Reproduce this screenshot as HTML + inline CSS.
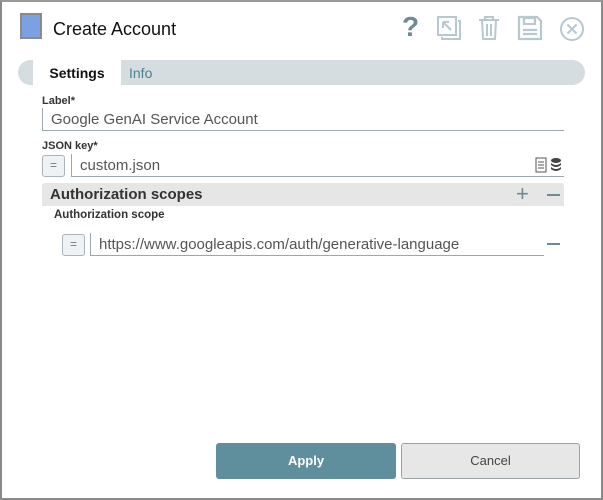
<!DOCTYPE html>
<html><head><style>
*{box-sizing:border-box;margin:0;padding:0}
body{width:603px;height:500px;background:#fff;font-family:"Liberation Sans",sans-serif;position:relative;overflow:hidden}
.frame{position:absolute;left:0;top:0;width:603px;height:500px;border:2px solid #8a8a8a;border-top-color:#999}
.a{position:absolute}
.eq{position:absolute;width:23px;height:22px;border:1px solid #a9b4bb;border-radius:3px;background:#eef2f4;color:#777;font-size:12px;text-align:center;line-height:19px}
.in{position:absolute;border-left:1px solid #9aa7ae;border-bottom:1px solid #9aa7ae;color:#555;font-size:15px;padding-left:8px;padding-top:3px}
</style></head><body>
<div class="frame"></div>
<div class="a" style="left:20px;top:13px;width:22px;height:26px;background:#7ca1e3;border:2px solid #8a8a8a"></div>
<div class="a" style="left:53px;top:19px;font-size:18px;color:#111">Create Account</div>
<div class="a" style="left:402px;top:11px;font-size:28px;font-weight:bold;color:#6d8a96">?</div>
<svg class="a" style="left:436px;top:15px" width="26" height="26" viewBox="0 0 26 26" fill="none" stroke="#b8c8cf" stroke-width="2"><rect x="2" y="2" width="18" height="18"/><path d="M6 22V24H24V6H22"/><path d="M7 7L15 15M7 7V13M7 7H13"/></svg>
<svg class="a" style="left:477px;top:15px" width="24" height="26" viewBox="0 0 24 26" fill="none" stroke="#b8c8cf" stroke-width="2"><path d="M2 5H22M8 5V2H16V5M5 5L6 24H18L19 5M10 9V21M14 9V21"/></svg>
<svg class="a" style="left:517px;top:15px" width="26" height="26" viewBox="0 0 26 26" fill="none" stroke="#b8c8cf" stroke-width="2.2"><path d="M2 2H20L24 6V24H2Z"/><rect x="7" y="3" width="11" height="6"/><path d="M6 15H20M6 19H20"/></svg>
<svg class="a" style="left:559px;top:16px" width="26" height="26" viewBox="0 0 26 26" fill="none" stroke="#b8c8cf" stroke-width="2"><circle cx="13" cy="13" r="11"/><path d="M8.5 8.5L17.5 17.5M17.5 8.5L8.5 17.5"/></svg>
<div class="a" style="left:18px;top:60px;width:567px;height:25px;background:#d5dde1;border-radius:13px"></div>
<div class="a" style="left:33px;top:60px;width:88px;height:25px;background:#fff;font-size:14px;font-weight:bold;color:#111;text-align:center;line-height:26px">Settings</div>
<div class="a" style="left:129px;top:60px;font-size:14px;color:#4e7f92;line-height:26px">Info</div>
<div class="a" style="left:42px;top:95px;font-size:11px;color:#333;font-weight:bold">Label*</div>
<div class="in" style="left:42px;top:108px;width:522px;height:23px">Google GenAI Service Account</div>
<div class="a" style="left:42px;top:140px;font-size:11px;color:#333;font-weight:bold">JSON key*</div>
<div class="eq" style="left:42px;top:155px">=</div>
<div class="in" style="left:71px;top:154px;width:493px;height:23px">custom.json</div>
<svg class="a" style="left:535px;top:157px" width="30" height="16" viewBox="0 0 30 16"><rect x="1" y="1" width="10" height="14" fill="#fff" stroke="#555"/><path d="M3 5H9M3 8H9M3 11H9" stroke="#555"/><ellipse cx="21" cy="3.5" rx="5" ry="2.5" fill="#444"/><path d="M16 6Q21 10 26 6V8Q21 12 16 8ZM16 10Q21 14 26 10V12Q21 16 16 12Z" fill="#444"/></svg>
<div class="a" style="left:42px;top:183px;width:522px;height:23px;background:#e6e6e6;border-radius:3px 3px 0 0"></div>
<div class="a" style="left:50px;top:186px;font-size:15px;font-weight:bold;color:#333">Authorization scopes</div>
<div class="a" style="left:516px;top:181px;font-size:22px;color:#6d8a96">+</div>
<div class="a" style="left:547px;top:194px;width:13px;height:2px;background:#6d8a96"></div>
<div class="a" style="left:54px;top:209px;font-size:11.5px;font-weight:bold;color:#333">Authorization scope</div>
<div class="eq" style="left:62px;top:234px">=</div>
<div class="in" style="left:90px;top:233px;width:454px;height:23px">https://www.googleapis.com/auth/generative-language</div>
<div class="a" style="left:547px;top:243px;width:13px;height:2px;background:#6d8a96"></div>
<div class="a" style="left:216px;top:443px;width:180px;height:36px;background:#5f8f9c;border-radius:3px;color:#fff;font-weight:bold;font-size:13px;text-align:center;line-height:36px">Apply</div>
<div class="a" style="left:401px;top:443px;width:179px;height:36px;background:#e7e7e7;border:1px solid #9aa2a6;border-radius:3px;color:#444;font-size:13px;text-align:center;line-height:34px">Cancel</div>
</body></html>
